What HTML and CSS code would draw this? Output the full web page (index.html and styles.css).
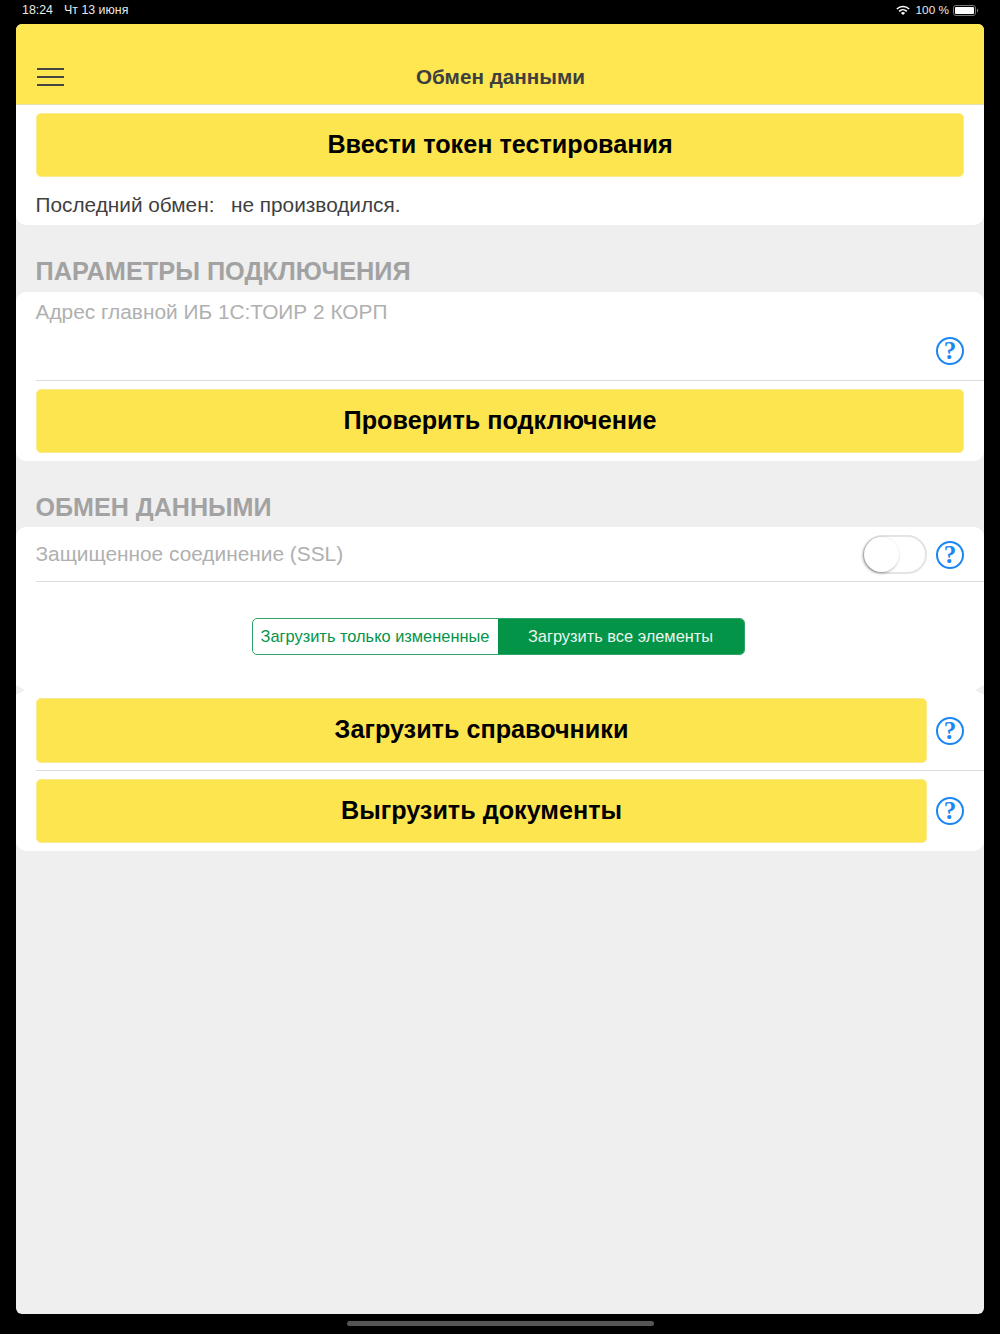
FILE: index.html
```html
<!DOCTYPE html>
<html lang="en">
<head>
  <meta charset="UTF-8">
  <meta name="viewport" content="width=device-width, initial-scale=1.0">
  <title>Обмен данными</title>
  <link rel="stylesheet" href="styles.css">
</head>
<body>
  <div class="status-bar">
    <div class="status-left"><span>18:24</span><span>Чт 13 июня</span></div>
    <div class="status-right">
      <svg class="wifi" width="14" height="10" viewBox="0 0 14 10">
        <path d="M0.3 3.4A9.6 9.6 0 0 1 13.7 3.4L12.6 4.6A8 8 0 0 0 1.4 4.6Z" fill="#fff"/>
        <path d="M2.6 5.7A6.4 6.4 0 0 1 11.4 5.7L10.3 6.9A4.8 4.8 0 0 0 3.7 6.9Z" fill="#fff"/>
        <path d="M4.9 8A3.1 3.1 0 0 1 9.1 8L7 10Z" fill="#fff"/>
      </svg>
      <span>100 %</span>
      <div class="battery"><div class="battery-fill"></div></div>
    </div>
  </div>

  <div class="screen">
    <header class="nav">
      <div class="burger"><i></i><i></i><i></i></div>
      <div class="nav-title">Обмен данными</div>
    </header>

    <section class="card card-first">
      <div class="btn-row"><button class="btn">Ввести токен тестирования</button></div>
      <div class="last-exchange"><span>Последний обмен:</span><span>не производился.</span></div>
    </section>

    <h2 class="section-title">ПАРАМЕТРЫ ПОДКЛЮЧЕНИЯ</h2>
    <section class="card">
      <div class="address-row">
        <div class="muted">Адрес главной ИБ 1С:ТОИР 2 КОРП</div>
        <div class="address-help"><span class="help">?</span></div>
      </div>
      <div class="btn-row"><button class="btn">Проверить подключение</button></div>
    </section>

    <h2 class="section-title section-title-second">ОБМЕН ДАННЫМИ</h2>
    <section class="card card-exchange">
      <div class="ssl-row">
        <div class="muted">Защищенное соединение (SSL)</div>
        <div class="toggle"><div class="knob"></div></div>
        <span class="help">?</span>
      </div>
      <div class="segment-row">
        <div class="segment">
          <div class="seg-item">Загрузить только измененные</div>
          <div class="seg-item seg-active">Загрузить все элементы</div>
        </div>
      </div>
      <div class="action-row action-first">
        <button class="btn">Загрузить справочники</button>
        <span class="help">?</span>
      </div>
      <div class="action-row">
        <button class="btn">Выгрузить документы</button>
        <span class="help">?</span>
      </div>
    </section>
  </div>

  <div class="home-area"><div class="home-bar"></div></div>
</body>
</html>
```

FILE: styles.css
```css
* {
  box-sizing: border-box;
}
html, body {
  height: 100%;
}
body {
  margin: 0;
  background: #000;
  font-family: 'Liberation Sans', Arial, sans-serif;
  display: flex;
  flex-direction: column;
  overflow: hidden;
}
.status-bar {
  height: 24px;
  padding: 0 24px 4px 22px;
  display: flex;
  justify-content: space-between;
  align-items: center;
  color: #e8e8e8;
  font-size: 12.4px;
}
.status-left {
  display: flex;
  gap: 11px;
}
.status-right {
  display: flex;
  align-items: center;
  gap: 5px;
  font-size: 11.8px;
}
.wifi {
  margin-right: 1px;
}
.battery {
  width: 23px;
  height: 11px;
  margin-left: -1px;
  border: 1px solid #777;
  border-radius: 3px;
  padding: 1px;
  position: relative;
}
.battery::after {
  content: '';
  position: absolute;
  right: -3px;
  top: 3px;
  width: 1px;
  height: 3px;
  background: #777;
}
.battery-fill {
  height: 100%;
  background: #fff;
  border-radius: 1px;
}
.screen {
  height: 1290px;
  margin: 0 16px;
  background: #efefef;
  border-radius: 6px;
  overflow: hidden;
}
.nav {
  height: 81px;
  background: #fee750;
  border-bottom: 1px solid #e6e0b0;
  padding: 0 20px 15px 21px;
  display: flex;
  align-items: flex-end;
}
.burger {
  width: 27px;
  height: 18px;
  margin-bottom: 3px;
  display: flex;
  flex-direction: column;
  justify-content: space-between;
}
.burger i {
  display: block;
  height: 2px;
  background: #444;
}
.nav-title {
  flex: 1;
  margin-right: 27px;
  text-align: center;
  font-size: 20.7px;
  line-height: 24px;
  font-weight: bold;
  color: #3f3f3f;
}
.card {
  background: #fff;
  border-radius: 10px;
}
.card-first {
  border-radius: 0 0 10px 10px;
  height: 120px;
  padding-top: 8px;
}
.btn-row {
  padding: 8px 20px;
}
.card-first .btn-row {
  padding-top: 0;
}
.btn {
  display: block;
  width: 100%;
  height: 64px;
  padding: 0 0 2px;
  border: 1px solid #fbeb8e;
  border-radius: 5px;
  background: #fde54f;
  color: #000;
  font-family: inherit;
  font-size: 25.2px;
  font-weight: bold;
}
.last-exchange {
  padding: 8px 20px 0 19.5px;
  display: flex;
  gap: 16.5px;
  font-size: 20.8px;
  line-height: 24px;
  color: #3f3f3f;
}
.section-title {
  margin: 0;
  height: 67px;
  padding: 32px 20px 0 19.5px;
  font-size: 25.3px;
  line-height: 28px;
  font-weight: bold;
  color: #a2a2a2;
}
.section-title-second {
  height: 66px;
  font-size: 25.1px;
}
.muted {
  margin-left: -0.5px;
  font-size: 20.85px;
  line-height: 24px;
  color: #b0b0b0;
}
.address-row {
  height: 89px;
  margin-left: 20px;
  padding: 8px 20px 0 0;
  border-bottom: 1px solid #dcdcdc;
}
.address-help {
  display: flex;
  justify-content: flex-end;
  margin-top: 13px;
}
.help {
  flex: none;
  width: 28px;
  height: 28px;
  border: 2px solid #1c86f2;
  border-radius: 50%;
  display: flex;
  align-items: center;
  justify-content: center;
  font-family: 'Liberation Serif', serif;
  font-size: 25px;
  font-weight: bold;
  color: #1c86f2;
}
.card-exchange {
  position: relative;
}
.card-exchange::before,
.card-exchange::after {
  content: '';
  position: absolute;
  top: 158px;
  width: 9px;
  height: 10px;
  background: #efefef;
}
.card-exchange::before {
  left: 0;
  clip-path: polygon(0 0, 100% 50%, 0 100%);
}
.card-exchange::after {
  right: 0;
  clip-path: polygon(100% 0, 0 50%, 100% 100%);
}
.ssl-row {
  height: 55px;
  margin-left: 20px;
  padding: 8px 20px 0 0;
  border-bottom: 1px solid #dcdcdc;
  display: flex;
  align-items: flex-start;
}
.ssl-row .muted {
  flex: 1;
  padding-top: 7px;
}
.toggle {
  width: 64px;
  height: 39px;
  margin-right: 9px;
  border: 2px solid #e4e4e4;
  border-radius: 20px;
  position: relative;
}
.knob {
  position: absolute;
  left: -1px;
  top: 0;
  width: 35px;
  height: 35px;
  border-radius: 50%;
  background: #fff;
  box-shadow: -1px 1px 3px rgba(0, 0, 0, 0.4);
}
.ssl-row .help {
  margin-top: 6px;
}
.segment-row {
  height: 116px;
  padding: 36px 4px 0 0;
  display: flex;
  justify-content: center;
}
.segment {
  width: 493px;
  height: 37px;
  display: flex;
  border: 1.5px solid #2ea567;
  border-radius: 5px;
  overflow: hidden;
  font-size: 16.4px;
  color: #039447;
}
.seg-item {
  width: 245px;
  display: flex;
  align-items: center;
  justify-content: center;
  white-space: nowrap;
}
.seg-active {
  flex: 1;
  background: #039447;
  color: #eaf6ef;
}
.action-row {
  height: 80px;
  margin-left: 20px;
  padding: 8px 20px 8px 0;
  display: flex;
  align-items: center;
  gap: 9px;
}
.action-first {
  height: 73px;
  padding-top: 0;
  padding-bottom: 7px;
  border-bottom: 1px solid #dcdcdc;
}
.action-first .btn {
  height: 65px;
}
.home-area {
  flex: 1;
  display: flex;
  justify-content: center;
  padding-top: 7px;
}
.home-bar {
  width: 307px;
  height: 5px;
  border-radius: 3px;
  background: #555;
}
```
